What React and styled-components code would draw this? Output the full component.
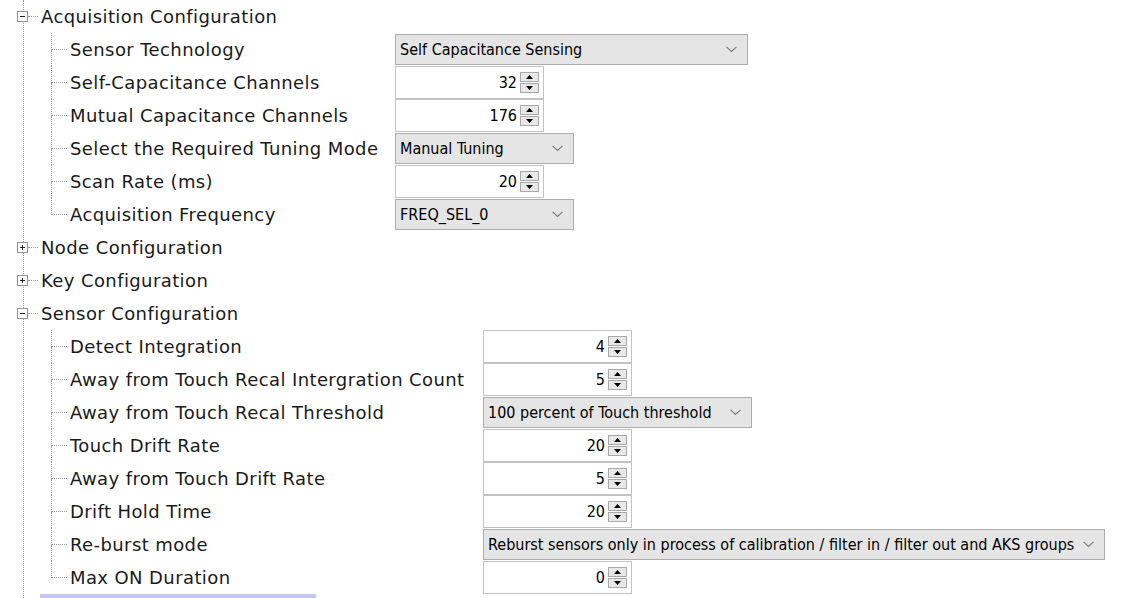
import React from 'react';
import styled, { createGlobalStyle } from 'styled-components';

const LINE = '#a0a0a0';
const CONTROL_FONT = '"DejaVu Sans Condensed", "Liberation Sans Narrow", "Liberation Sans", Arial, sans-serif';

const GlobalStyle = createGlobalStyle`
  html, body { margin: 0; padding: 0; background: #fff; overflow: hidden; }
  body { font-family: "DejaVu Sans", Verdana, sans-serif; color: #1a1a1a; }
`;

const Page = styled.div`
  width: 1132px;
  height: 598px;
  overflow: hidden;
  background: #fff;
`;

const Tree = styled.div`
  margin-left: 23px;
  border-left: 1px dotted ${LINE};
  display: flex;
  flex-direction: column;
  min-height: 660px;
`;

const GroupHeader = styled.div`
  height: 33px;
  display: flex;
  align-items: center;
`;

const ExpanderBox = styled.svg`
  display: block;
  width: 11px;
  height: 11px;
  margin-left: -7px;
  flex: none;
`;

const HDots = styled.div`
  width: ${p => p.$w}px;
  height: 0;
  border-top: 1px dotted ${LINE};
  flex: none;
`;

const HeaderLabel = styled.div`
  margin-left: 3px;
  font-size: 18px;
  letter-spacing: 0.4px;
  line-height: 33px;
  white-space: nowrap;
`;

const SelectionBar = styled.div`
  margin-left: 2px;
  width: 276px;
  height: 33px;
  background: #c4c4f7;
`;

const ChildGrid = styled.div`
  margin-left: 27px;
  display: grid;
  grid-template-columns: ${p => p.$labelWidth}px max-content;
  grid-auto-rows: 33px;
`;

const ChildLabel = styled.div`
  display: flex;
  align-items: stretch;
  height: 33px;
`;

const Connector = styled.div`
  width: 16px;
  display: flex;
  flex-direction: column;
  flex: none;
`;

const ConnectorTop = styled.div`
  height: 16px;
  border-left: 1px dotted ${LINE};
  border-bottom: 1px dotted ${LINE};
`;

const ConnectorBottom = styled.div`
  flex: 1;
  border-left: 1px dotted ${p => (p.$last ? 'transparent' : LINE)};
`;

const LabelText = styled.div`
  padding-left: 3px;
  font-size: 18px;
  letter-spacing: 0.4px;
  line-height: 33px;
  white-space: nowrap;
`;

const ValueCell = styled.div`
  display: flex;
  align-items: center;
  height: 33px;
`;

const Dropdown = styled.div`
  box-sizing: border-box;
  width: ${p => p.$w}px;
  height: 31px;
  border: 1px solid #adadad;
  background: #e5e5e5;
  display: flex;
  align-items: center;
  justify-content: space-between;
  padding: 0 10px 0 4px;
  font-family: ${CONTROL_FONT};
  font-size: 16px;
  color: #000;
  white-space: nowrap;
`;

const Chevron = styled.svg`
  display: block;
  width: 11px;
  height: 7px;
  flex: none;
`;

const Spinner = styled.div`
  box-sizing: border-box;
  width: ${p => p.$w}px;
  height: 33px;
  border: 1px solid #c2c2c2;
  background: #fff;
  display: flex;
  align-items: center;
  justify-content: flex-end;
  padding-right: 4px;
  font-family: ${CONTROL_FONT};
  font-size: 16px;
  color: #000;
`;

const SpinValue = styled.span`
  margin-right: 3px;
`;

const SpinButtons = styled.div`
  display: flex;
  flex-direction: column;
  gap: 1px;
`;

const SpinButton = styled.div`
  box-sizing: border-box;
  width: 19px;
  height: 10px;
  border: 1px solid #a8a8a8;
  background: #e8e8e8;
  display: flex;
  align-items: center;
  justify-content: center;
`;

const Arrow = styled.svg`
  display: block;
  width: 7px;
  height: 4px;
`;

function Expander({ open }) {
  return (
    <ExpanderBox viewBox="0 0 11 11">
      <rect x="0.5" y="0.5" width="10" height="10" fill="#fff" stroke="#919191" />
      <line x1="3" y1="5.5" x2="8" y2="5.5" stroke="#222" />
      {!open && <line x1="5.5" y1="3" x2="5.5" y2="8" stroke="#222" />}
    </ExpanderBox>
  );
}

function Header({ open, label, selected }) {
  return (
    <GroupHeader>
      <Expander open={open} />
      <HDots $w={10} />
      {selected ? <SelectionBar /> : <HeaderLabel>{label}</HeaderLabel>}
    </GroupHeader>
  );
}

function DropdownControl({ w, value }) {
  return (
    <Dropdown $w={w}>
      <span>{value}</span>
      <Chevron viewBox="0 0 11 7">
        <polyline points="0.5,0.8 5.5,5.5 10.5,0.8" fill="none" stroke="#7a7a7a" strokeWidth="1.1" />
      </Chevron>
    </Dropdown>
  );
}

function SpinnerControl({ w, value }) {
  return (
    <Spinner $w={w}>
      <SpinValue>{value}</SpinValue>
      <SpinButtons>
        <SpinButton>
          <Arrow viewBox="0 0 7 4"><polygon points="3.5,0 7,4 0,4" fill="#000" /></Arrow>
        </SpinButton>
        <SpinButton>
          <Arrow viewBox="0 0 7 4"><polygon points="0,0 7,0 3.5,4" fill="#000" /></Arrow>
        </SpinButton>
      </SpinButtons>
    </Spinner>
  );
}

function Group({ label, labelWidth, items }) {
  return (
    <>
      <Header open label={label} />
      <ChildGrid $labelWidth={labelWidth}>
        {items.map((it, i) => (
          <React.Fragment key={it.label}>
            <ChildLabel>
              <Connector>
                <ConnectorTop />
                <ConnectorBottom $last={i === items.length - 1} />
              </Connector>
              <LabelText>{it.label}</LabelText>
            </ChildLabel>
            <ValueCell>
              {it.type === 'dropdown'
                ? <DropdownControl w={it.w} value={it.value} />
                : <SpinnerControl w={149} value={it.value} />}
            </ValueCell>
          </React.Fragment>
        ))}
      </ChildGrid>
    </>
  );
}

const acquisition = [
  { label: 'Sensor Technology', type: 'dropdown', w: 353, value: 'Self Capacitance Sensing' },
  { label: 'Self-Capacitance Channels', type: 'spin', value: '32' },
  { label: 'Mutual Capacitance Channels', type: 'spin', value: '176' },
  { label: 'Select the Required Tuning Mode', type: 'dropdown', w: 179, value: 'Manual Tuning' },
  { label: 'Scan Rate (ms)', type: 'spin', value: '20' },
  { label: 'Acquisition Frequency', type: 'dropdown', w: 179, value: 'FREQ_SEL_0' },
];

const sensor = [
  { label: 'Detect Integration', type: 'spin', value: '4' },
  { label: 'Away from Touch Recal Intergration Count', type: 'spin', value: '5' },
  { label: 'Away from Touch Recal Threshold', type: 'dropdown', w: 269, value: '100 percent of Touch threshold' },
  { label: 'Touch Drift Rate', type: 'spin', value: '20' },
  { label: 'Away from Touch Drift Rate', type: 'spin', value: '5' },
  { label: 'Drift Hold Time', type: 'spin', value: '20' },
  { label: 'Re-burst mode', type: 'dropdown', w: 622, value: 'Reburst sensors only in process of calibration / filter in / filter out and AKS groups' },
  { label: 'Max ON Duration', type: 'spin', value: '0' },
];

export default function App() {
  return (
    <Page>
      <GlobalStyle />
      <Tree>
        <Group label="Acquisition Configuration" labelWidth={344} items={acquisition} />
        <Header label="Node Configuration" />
        <Header label="Key Configuration" />
        <Group label="Sensor Configuration" labelWidth={432} items={sensor} />
        <Header selected />
      </Tree>
    </Page>
  );
}
